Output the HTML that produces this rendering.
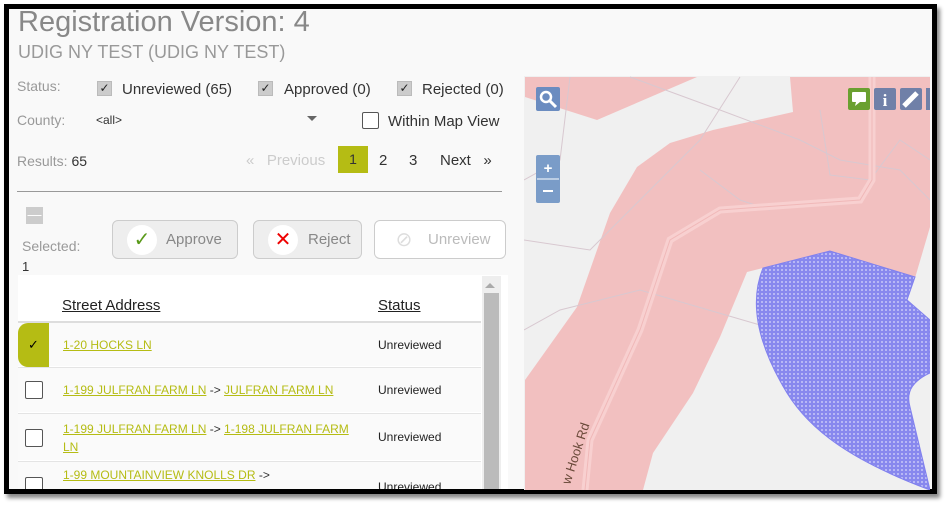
<!DOCTYPE html>
<html><head><style>
*{margin:0;padding:0;box-sizing:border-box}
body{width:947px;height:508px;background:#fff;position:relative;overflow:hidden;font-family:"Liberation Sans",sans-serif}
.frame{position:absolute;left:4px;top:4px;width:933px;height:490px;border:5px solid #000;background:#f9f9f9;overflow:hidden;box-shadow:3px 4px 4px #888}
.w{position:absolute;left:-1px;top:-4px;width:940px;height:500px}
.a{position:absolute;white-space:nowrap}
.cb{position:absolute;width:15px;height:15px;background:#ccc;border:1px solid #bbb;font-size:12px;line-height:13px;text-align:center;color:#222}
.btn{position:absolute;top:215px;height:39px;border:1px solid #ccc;border-radius:6px;background:#eee;font-size:15px;color:#888}
.btn .c{position:absolute;left:14px;top:4px;width:30px;height:30px;border-radius:50%;background:#fff;text-align:center;line-height:30px;font-size:20px}
.btn span.t{position:absolute;top:10px}
.lnk{color:#b5bc14;text-decoration:underline}
.row{position:absolute;left:10px;width:463px;background:#fafafa;border-top:1px solid #e4e4e4}
.rcb{position:absolute;left:7px;width:18px;height:18px;border:1px solid #555;background:#fff;border-radius:2px}
</style></head><body>
<div class="frame"><div class="w">
<div class="a" style="left:10px;top:1px;font-size:29px;color:#888">Registration Version: 4</div>
<div class="a" style="left:10px;top:37px;font-size:18px;color:#999">UDIG NY TEST (UDIG NY TEST)</div>
<div class="a" style="left:9px;top:73px;font-size:14px;color:#999">Status:</div>
<div class="cb" style="left:89px;top:76px">✓</div><div class="a" style="left:114px;top:76px;font-size:15px;color:#333">Unreviewed (65)</div>
<div class="cb" style="left:250px;top:76px">✓</div><div class="a" style="left:276px;top:76px;font-size:15px;color:#333">Approved (0)</div>
<div class="cb" style="left:389px;top:76px">✓</div><div class="a" style="left:414px;top:76px;font-size:15px;color:#333">Rejected (0)</div>
<div class="a" style="left:9px;top:107px;font-size:14px;color:#999">County:</div>
<div class="a" style="left:88px;top:108px;font-size:12px;color:#333">&lt;all&gt;</div>
<div class="a" style="left:299px;top:111px;width:0;height:0;border:5px solid transparent;border-top:5px solid #666"></div>
<div class="a" style="left:354px;top:107px;width:17px;height:17px;border:1px solid #555;background:#fff;border-radius:2px"></div>
<div class="a" style="left:380px;top:108px;font-size:15px;color:#333">Within Map View</div>
<div class="a" style="left:9px;top:148px;font-size:14px;color:#999">Results: <span style="color:#333">65</span></div>
<div class="a" style="left:238px;top:147px;font-size:15px;color:#ccc">«&nbsp;&nbsp; Previous</div>
<div class="a" style="left:330px;top:141px;width:30px;height:27px;background:#b5bc14;color:#333;font-size:14px;text-align:center;line-height:27px">1</div>
<div class="a" style="left:371px;top:147px;font-size:15px;color:#333">2</div>
<div class="a" style="left:401px;top:147px;font-size:15px;color:#333">3</div>
<div class="a" style="left:432px;top:147px;font-size:15px;color:#333">Next &nbsp;&nbsp;»</div>
<div class="a" style="left:9px;top:186px;width:485px;height:1px;background:#999"></div>
<div class="a" style="left:18px;top:202px;width:17px;height:17px;background:#ccc;color:#fff;font-size:14px;text-align:center;line-height:15px">—</div>
<div class="a" style="left:14px;top:233px;font-size:14px;color:#999">Selected:</div>
<div class="a" style="left:14px;top:254px;font-size:13px;color:#333">1</div>
<div class="btn" style="left:104px;width:126px"><div class="c" style="color:#5a9a1a">✓</div><span class="t" style="left:53px">Approve</span></div>
<div class="btn" style="left:245px;width:109px"><div class="c" style="color:#e00">✕</div><span class="t" style="left:54px">Reject</span></div>
<div class="btn" style="left:366px;width:132px;background:#fff;color:#bbb"><div class="c" style="color:#ddd">⊘</div><span class="t" style="left:53px">Unreview</span></div>
<div class="a" style="left:10px;top:270px;width:490px;height:230px;background:#fff"></div>
<div class="a" style="left:54px;top:292px;font-size:15px;color:#222;text-decoration:underline">Street Address</div>
<div class="a" style="left:370px;top:292px;font-size:15px;color:#222;text-decoration:underline">Status</div>
<div class="row" style="top:316px;height:45px;border-top:2px solid #ddd"><div class="a" style="left:0;top:0;width:31px;height:44px;background:#b5bc14;border-radius:10px 0 0 10px;text-align:center;line-height:44px;font-size:13px">✓</div><div class="a lnk" style="left:45px;top:15px;font-size:12px">1-20 HOCKS LN</div><div class="a" style="left:360px;top:15px;font-size:12px;color:#222">Unreviewed</div></div>
<div class="row" style="top:362px;height:45px"><div class="rcb" style="top:13px"></div><div class="a" style="left:45px;top:15px;font-size:12px;color:#333"><span class="lnk">1-199 JULFRAN FARM LN</span> -&gt; <span class="lnk">JULFRAN FARM LN</span></div><div class="a" style="left:360px;top:15px;font-size:12px;color:#222">Unreviewed</div></div>
<div class="row" style="top:408px;height:47px"><div class="rcb" style="top:15px"></div><div class="a" style="left:45px;top:6px;font-size:12px;color:#333;line-height:18px"><span class="lnk">1-199 JULFRAN FARM LN</span> -&gt; <span class="lnk">1-198 JULFRAN FARM</span><br><span class="lnk">LN</span></div><div class="a" style="left:360px;top:16px;font-size:12px;color:#222">Unreviewed</div></div>
<div class="row" style="top:456px;height:44px"><div class="rcb" style="top:15px"></div><div class="a" style="left:45px;top:6px;font-size:12px;color:#333"><span class="lnk">1-99 MOUNTAINVIEW KNOLLS DR</span> -&gt;</div><div class="a" style="left:360px;top:18px;font-size:12px;color:#222">Unreviewed</div></div>
<div class="a" style="left:474px;top:271px;width:19px;height:230px;background:#eee"></div>
<div class="a" style="left:477px;top:278px;border:5px solid transparent;border-bottom:5px solid #aaa;border-top:0"></div>
<div class="a" style="left:476px;top:288px;width:15px;height:212px;background:#bbb"></div>
</div></div>
<svg class="a" style="left:524px;top:76px" width="406" height="414" viewBox="524 76 406 414">
<defs><pattern id="d" width="4" height="4" patternUnits="userSpaceOnUse"><rect width="4" height="4" fill="#8888ee"/><circle cx="2" cy="2" r="1" fill="#c8c8f8"/></pattern></defs>
<rect x="524" y="76" width="406" height="414" fill="#f0f0f0"/>
<polygon points="525,77 697,77 597,120 525,97" fill="#f2c0c0"/>
<polygon points="790,77 930,77 930,227 915,278 830,253 763,268 747,272 720,337 693,393 653,453 643,490 525,490 525,380 577,307 610,213 637,167 670,143 713,130 793,112" fill="#f2c0c0"/>
<g stroke="#d8c8d0" fill="none" stroke-width="1"><path d="M570,77 L560,160 L524,180"/><path d="M740,77 L700,140 L590,250 L524,240"/><path d="M524,330 L560,310 L640,290 L760,325"/><path d="M630,77 L720,110 L800,140 L840,160 L900,170 L930,200"/><path d="M820,110 L830,175 L870,180 L900,140 L930,160"/><path d="M700,170 L740,200 L770,210"/></g>
<path d="M585,490 L590,440 L640,330 L670,240 L720,210 L860,200 L872,180 L872,77" stroke="#f8d0d0" stroke-width="7" fill="none"/>
<path d="M585,490 L590,440 L640,330 L670,240 L720,210 L860,200 L872,180 L872,77" stroke="#f0b8b8" stroke-width="1" fill="none"/>
<path d="M830,251 L763,268 C750,300 755,340 787,393 C810,430 850,460 930,490 L910,407 C905,390 915,380 930,373 L930,320 L907,300 L915,277 Z" fill="url(#d)" stroke="#8080ee"/>
<text x="0" y="0" transform="translate(570,485) rotate(-72)" font-size="13" fill="#6a4a3a" font-family="Liberation Sans">w Hook Rd</text>
<rect x="536" y="87" width="24" height="24" rx="2" fill="#6b8cc0"/><circle cx="546" cy="97" r="5" fill="none" stroke="#fff" stroke-width="2.5"/><path d="M550,101 L556,107" stroke="#fff" stroke-width="3"/>
<rect x="536" y="155" width="24" height="48" rx="2" fill="#7a9cc8"/><line x1="537" y1="179" x2="559" y2="179" stroke="#fff"/>
<text x="548" y="173" text-anchor="middle" fill="#fff" font-size="15" font-weight="bold">+</text><path d="M543,191 H553" stroke="#fff" stroke-width="2"/>
<rect x="848" y="88" width="22" height="22" rx="2" fill="#6aa030"/><rect x="852" y="92" width="14" height="10" rx="1" fill="#fff"/><path d="M856,102 L855,106 L860,102Z" fill="#fff"/>
<rect x="874" y="88" width="22" height="22" rx="2" fill="#7080a8"/><text x="885" y="106" text-anchor="middle" fill="#fff" font-size="17" font-weight="bold" font-family="Liberation Serif">i</text>
<rect x="900" y="88" width="22" height="22" rx="2" fill="#7080a8"/><path d="M904,106 L917,93" stroke="#fff" stroke-width="5"/>
<rect x="926" y="88" width="6" height="22" fill="#7080a8"/>
</svg>
</body></html>
